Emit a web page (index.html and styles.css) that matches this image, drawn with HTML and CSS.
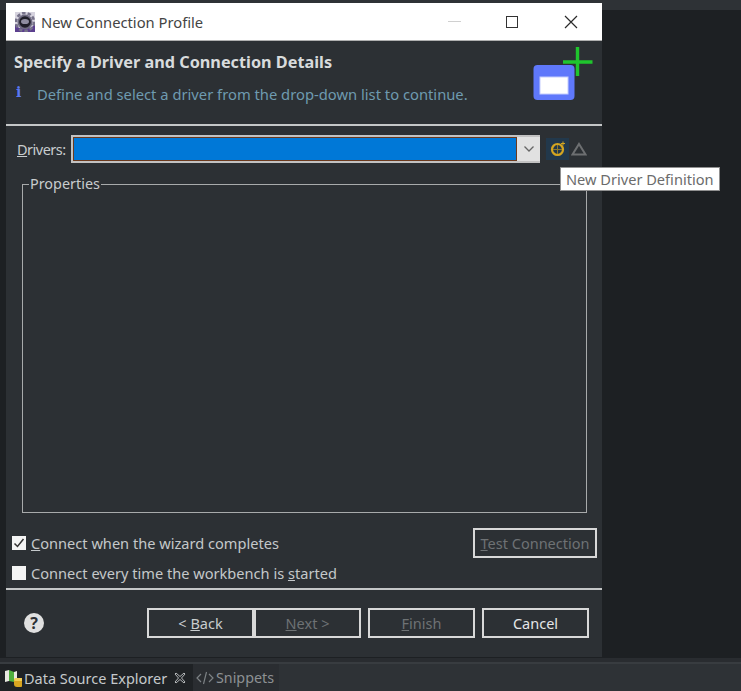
FILE: index.html
```html
<!DOCTYPE html>
<html lang="en">
<head>
<meta charset="utf-8">
<title>New Connection Profile</title>
<link rel="stylesheet" href="styles.css">
</head>
<body>
<div class="desk">
  <div class="top-strip"></div>
  <div class="desk-main"></div>
  <div class="tab-gap"></div>
  <div class="tabbar">
    <div class="tab active">
      <svg class="tab-icon" width="18" height="18" viewBox="0 0 18 18">
        <path d="M1 2 L5 1 L5 12 L1 13 Z" fill="#e8e8e0"/>
        <path d="M5 1 L10 3 L10 13 L5 12 Z" fill="#4fae3c"/>
        <path d="M10 3 L13 2 L13 9 L10 13 Z" fill="#e8e8e0"/>
        <rect x="10" y="9" width="9" height="9" rx="3" fill="#d9a520"/>
        <rect x="10" y="9" width="9" height="3" rx="1.5" fill="#f0cc55"/>
      </svg>
      <span class="tab-label">Data Source Explorer</span>
      <svg class="tab-close" width="12" height="12" viewBox="0 0 12 12">
        <path d="M2 1 L6 4.5 L10 1 L11 2 L7.5 6 L11 10 L10 11 L6 7.5 L2 11 L1 10 L4.5 6 L1 2 Z" fill="none" stroke="#b5b8ba" stroke-width="1"/>
      </svg>
    </div>
    <div class="tab inactive">
      <svg class="snip-icon" width="18" height="14" viewBox="0 0 18 14">
        <path d="M5 3 L1 7 L5 11 M13 3 L17 7 L13 11" fill="none" stroke="#7d8285" stroke-width="1.2"/>
        <path d="M10.5 1 L7.5 13" fill="none" stroke="#7d8285" stroke-width="1.2"/>
      </svg>
      <span class="tab-label dim">Snippets</span>
    </div>
  </div>
</div>

<div class="dialog">
  <div class="titlebar">
    <svg class="app-icon" width="20" height="20" viewBox="0 0 20 20">
      <rect x="0" y="0" width="20" height="20" fill="#d6d3de"/>
      <path d="M0 12 L4 16 L16 16 L20 12 L20 20 L0 20 Z" fill="#5b3f8f"/>
      <circle cx="10" cy="10" r="9" fill="none" stroke="#77738a" stroke-width="2.600" stroke-dasharray="3.500 2.100"/>
      <circle cx="10" cy="10" r="7.500" fill="#6e6a80"/>
      <circle cx="10" cy="10" r="5.800" fill="#1f1e28"/>
      <ellipse cx="10" cy="9.500" rx="4" ry="2.600" fill="#8f8da0"/>
    </svg>
    <span class="title">New Connection Profile</span>
    <div class="win-controls">
      <span class="win-min"></span>
      <span class="win-max"></span>
      <svg class="win-close" width="14" height="14" viewBox="0 0 14 14">
        <path d="M1 1 L13 13 M13 1 L1 13" stroke="#2a2a2a" stroke-width="1.2" fill="none"/>
      </svg>
    </div>
  </div>

  <div class="banner">
    <div class="banner-text">
      <h1 class="heading">Specify a Driver and Connection Details</h1>
      <div class="info-row">
        <span class="info-icon">i</span>
        <span class="info-text">Define and select a driver from the drop-down list to continue.</span>
      </div>
    </div>
    <svg class="wizard-icon" width="60" height="56" viewBox="0 0 60 56">
      <rect x="0.500" y="19" width="41" height="35" rx="4" fill="#5f78fb"/>
      <rect x="7" y="31" width="28" height="17" fill="#ffffff" stroke="#c5cdfd" stroke-width="1"/>
      <path d="M30 16 H59.500 M44.500 1 V30" stroke="#1fc52d" stroke-width="3.400" fill="none"/>
    </svg>
  </div>

  <div class="rule"></div>

  <div class="driver-row">
    <span class="driver-label"><u>D</u>rivers:</span>
    <div class="combo">
      <div class="combo-field"></div>
      <div class="combo-arrow">
        <svg width="12" height="8" viewBox="0 0 12 8"><path d="M1.500 1.500 L6 6 L10.500 1.500" fill="none" stroke="#666" stroke-width="1.300"/></svg>
      </div>
    </div>
    <div class="tool-btn">
      <svg width="16" height="16" viewBox="0 0 16 16">
        <circle cx="7.500" cy="8.500" r="5.500" fill="none" stroke="#d4a520" stroke-width="2.200"/>
        <path d="M7.500 4 V13 M3 8.500 H12" stroke="#8e7a2c" stroke-width="1"/>
        <path d="M13 0.500 V4.500 M11 2.500 H15" stroke="#d4a520" stroke-width="1"/>
      </svg>
    </div>
    <svg class="warn-icon" width="16" height="14" viewBox="0 0 16 14"><path d="M8 2 L14.500 12.500 H1.500 Z" fill="none" stroke="#6d6f71" stroke-width="2"/></svg>
  </div>

  <fieldset class="props">
    <legend class="props-legend">Properties</legend>
  </fieldset>

  <div class="options">
    <div class="opt-left">
      <label class="check-row">
        <span class="check on">
          <svg width="14" height="14" viewBox="0 0 14 14"><path d="M2.500 7.500 L5.500 10.500 L11.500 3" fill="none" stroke="#333" stroke-width="1.500"/></svg>
        </span>
        <span><u>C</u>onnect when the wizard completes</span>
      </label>
      <label class="check-row">
        <span class="check"></span>
        <span>Connect every time the workbench is <u>s</u>tarted</span>
      </label>
    </div>
    <button class="btn test" disabled><u>T</u>est Connection</button>
  </div>

  <div class="rule"></div>

  <div class="footer">
    <span class="help">?</span>
    <div class="nav">
      <button class="btn nav-btn">&lt; <u>B</u>ack</button>
      <button class="btn nav-btn off" disabled><u>N</u>ext &gt;</button>
      <button class="btn nav-btn off finish" disabled><u>F</u>inish</button>
      <button class="btn nav-btn cancel">Cancel</button>
    </div>
  </div>
</div>

<div class="tooltip">New Driver Definition</div>
</body>
</html>
```
FILE: styles.css
```css
* { box-sizing: border-box; }
html, body { margin: 0; padding: 0; }
body {
  width: 741px;
  height: 691px;
  overflow: hidden;
  position: relative;
  background: #1d2023;
  font-family: "Noto Sans", "Open Sans", sans-serif;
  font-size: 14.750px;
  color: #c8ccce;
}
.desk { display: flex; flex-direction: column; height: 691px; }
.top-strip { height: 10px; background: #2e3236; }
.desk-main { flex: 1; background: #1d2023; }
.tab-gap { height: 4px; background: #292c30; }
.tabbar {
  height: 29px;
  display: flex;
  background: #2e3236;
  border-top: 2px solid #383c40;
}
.tab { display: flex; align-items: center; height: 100%; }
.tab.active { width: 193px; background: #1f2225; padding-left: 4px; }
.tab.inactive { width: 86px; padding-left: 3px; background: #2a2d31; }
.tab-icon { margin-right: 2px; }
.tab-label { font-size: 14.500px; color: #c5c9cb; }
.tab-label.dim { font-size: 14.300px; color: #8d9194; }
.tab-close { margin-left: 7px; }
.snip-icon { margin-right: 2px; }

.dialog {
  position: absolute;
  left: 6px;
  top: 3px;
  width: 596px;
  height: 654px;
  background: #2c3034;
  display: flex;
  flex-direction: column;
}
.titlebar {
  height: 38px;
  flex: none;
  background: #ffffff;
  border-bottom: 1px solid #b0b0b0;
  display: flex;
  align-items: center;
  padding-left: 9px;
}
.app-icon { margin-right: 6px; }
.title { color: #444; }
.win-controls { margin-left: auto; display: flex; align-items: center; }
.win-min { width: 13px; height: 1px; background: #d0d0d0; margin-right: 45px; margin-top: -1px; }
.win-max { width: 12px; height: 12px; border: 1.500px solid #333; margin-right: 46px; }
.win-close { margin-right: 24px; }

.banner {
  height: 83px;
  flex: none;
  display: flex;
  justify-content: space-between;
  position: relative;
  padding: 11px 0 0 8px;
}
.heading { margin: 0; font-size: 16.250px; font-weight: 700; color: #d8dbdc; line-height: 20px; }
.info-row { display: flex; align-items: center; margin-top: 12px; }
.info-icon {
  width: 23px;
  padding-left: 2px;
  font-family: "DejaVu Serif", serif;
  font-weight: 700;
  font-size: 14px;
  line-height: 14px;
  color: #5a78f0;
  margin-top: -4px;
}
.info-text { color: #6f9bb0; line-height: 20px; }
.wizard-icon { position: absolute; left: 527px; top: 5px; }

.rule { height: 2px; flex: none; background: #c4c6c7; }

.driver-row {
  height: 46px;
  flex: none;
  display: flex;
  align-items: center;
  padding-left: 11px;
}
.driver-label { width: 54px; font-size: 14.500px; letter-spacing: -0.500px; }
.combo {
  width: 469px;
  height: 28px;
  display: flex;
  background: #dcdcdc;
  border: 2px solid #c2c2c2;
  border-right: none;
}
.combo-field { flex: 1; background: #0078d7; border: 1px solid #6b3a1e; }
.combo-arrow { width: 23px; display: flex; align-items: center; justify-content: center; background: #e1e1e1; }
.tool-btn {
  width: 23px;
  height: 22px;
  margin-left: 6px;
  background: #22384b;
  display: flex;
  align-items: center;
  justify-content: center;
}
.warn-icon { margin-left: 2px; }

.props {
  margin: 3px 0 0 16px;
  width: 565px;
  height: 338px;
  flex: none;
  padding: 0;
  border: 1px solid #a8aaab;
}
.props-legend { padding: 0 1px; margin-left: 6px; font-size: 14.400px; line-height: 18px; }

.options {
  display: flex;
  justify-content: space-between;
  align-items: flex-start;
  padding: 20px 5px 0 6px;
  height: 75px;
  flex: none;
}
.opt-left { display: flex; flex-direction: column; gap: 10px; }
.check-row { display: flex; align-items: center; height: 20px; font-size: 14.600px; color: #c4c8ca; }
.check {
  width: 14px;
  height: 14px;
  background: #f4f4f4;
  margin-right: 5px;
  display: block;
}
.check svg { display: block; }

.btn {
  font-family: inherit;
  font-size: 14.500px;
  background: transparent;
  border: 2px solid #d8d8d8;
  color: #c8ccce;
  padding: 0;
  height: 30px;
  border-radius: 0;
}
.btn.test { width: 124px; color: #6e7274; margin-top: -5px; }
.btn.off { color: #6e7274; }

.footer { flex: 1; display: flex; align-items: flex-start; padding: 18px 13px 0 18px; }
.help {
  width: 20px;
  height: 20px;
  margin-top: 5px;
  border-radius: 50%;
  background: #e0e0e0;
  color: #2c3034;
  font-size: 16px;
  font-weight: 700;
  line-height: 20px;
  text-align: center;
}
.nav { margin-left: auto; display: flex; }
.nav-btn { width: 107px; }
.nav-btn.finish { margin-left: 7px; }
.nav-btn.cancel { margin-left: 7px; color: #e4e6e7; }

.tooltip {
  position: absolute;
  left: 560px;
  top: 167px;
  width: 160px;
  height: 24px;
  background: #ffffff;
  border: 1px solid #909090;
  color: #6b6b6b;
  font-size: 14.600px;
  line-height: 22px;
  padding-left: 5px;
  white-space: nowrap;
}
```
